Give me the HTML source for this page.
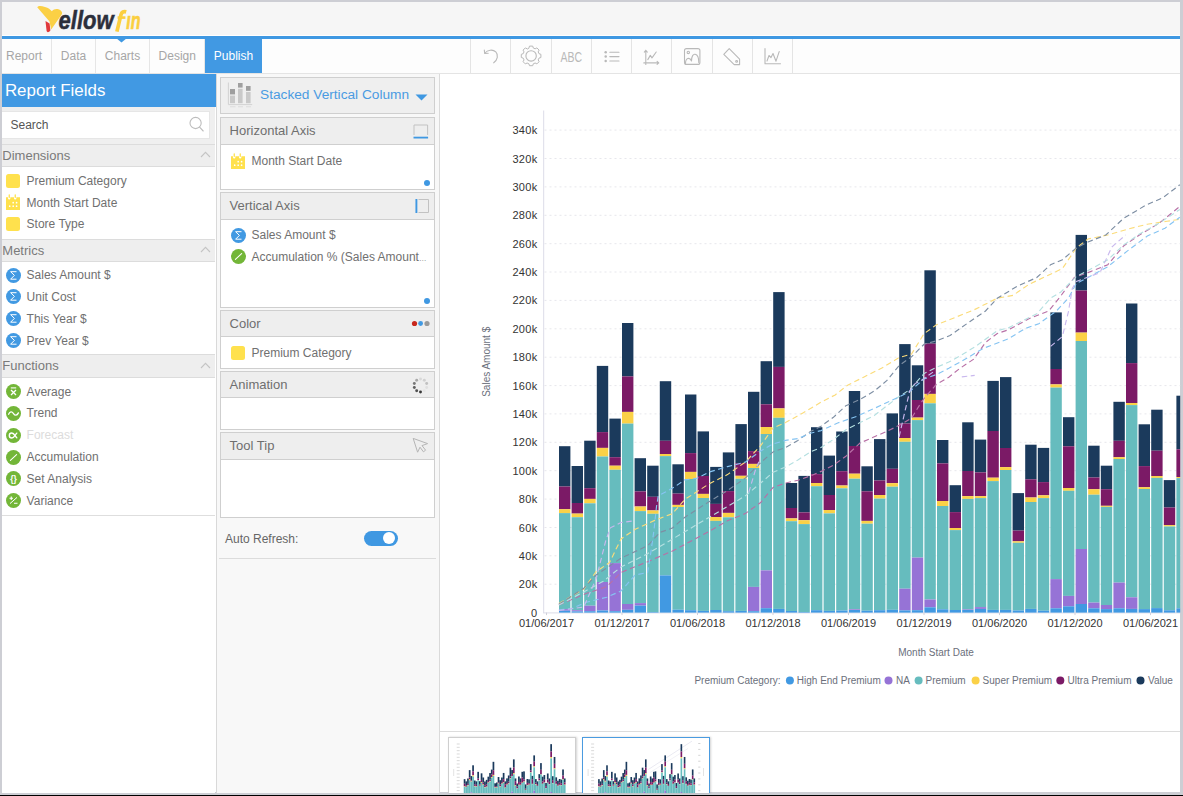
<!DOCTYPE html>
<html><head><meta charset="utf-8"><title>Yellowfin</title>
<style>
html,body{margin:0;padding:0}
body{width:1183px;height:796px;overflow:hidden;background:#cdced4;position:relative;font-family:"Liberation Sans",sans-serif}
.abs{position:absolute;white-space:nowrap}
.it{font-size:12px;color:#707070}
.dis{color:#dcdcdc}
.sh{background:#eeeeee;border-top:1px solid #dcdcdc;border-bottom:1px solid #dcdcdc;box-sizing:border-box;font-size:13px;color:#7a7a7a;padding-left:0px}
.tab{font-size:12px;color:#a6a6a6;text-align:center;height:34.5px;line-height:35px;top:38.5px}
.ph{background:#eeeeee;border:1px solid #cfcfcf;box-sizing:border-box;font-size:13px;color:#6f6f6f;padding-left:8.6px;left:220px;width:214.5px}
.pb{background:#fff;border:1px solid #cfcfcf;border-top:none;box-sizing:border-box;left:220px;width:214.5px}
#bars rect{width:var(--bw,11.4px)}
.yl{font-size:11px;fill:#333;letter-spacing:.3px;font-family:"Liberation Sans",sans-serif}
.xl{letter-spacing:0}
.lg{font-size:10px;fill:#6b6f7b;font-family:"Liberation Sans",sans-serif}
</style></head><body>
<div class="abs" style="left:2.3px;top:2.3px;width:1177.9px;height:790.2px;background:#fff"></div>
<div class="abs" style="left:0;top:794.8px;width:1183px;height:1.2px;background:#000"></div>
<!-- header -->
<div class="abs" style="left:2.3px;top:2.3px;width:1177.9px;height:32.9px;background:#f6f6f6"></div>
<div class="abs" style="left:2.3px;top:35.9px;width:1177.9px;height:2.7px;background:#3f98e2"></div>
<!-- logo -->
<svg class="abs" style="left:30px;top:2px" width="120" height="34" viewBox="30 2 120 34">
<path d="M37.2,7.2 C38.5,5.6 41,5.8 45,6.9 C48.5,7.8 50.3,9.2 51.8,11.3 C53.5,9.2 56,8.4 58.5,9.2 C61,10 62.6,12 62,14 L51.2,29.6 L49.5,21.5 Z" fill="#fbd045"/>
<path d="M45.5,21 L49.6,23.5 L50.4,30.5 C48.8,32.6 47,32.6 46.6,31 Z" fill="#e0393b"/>
<text x="58.6" y="28.8" font-family="Liberation Sans" font-weight="bold" font-style="italic" font-size="25.5" fill="#2c2f3b" stroke="#2c2f3b" stroke-width="0.5" textLength="55" lengthAdjust="spacingAndGlyphs">ellow</text>
<path d="M116.9,31.6 L121,14.6 C121.7,11.9 123.6,11.2 126.2,11.9" fill="none" stroke="#fbcf3f" stroke-width="3.7" stroke-linecap="butt"/><path d="M117.6,17.6 H125.4" stroke="#fbcf3f" stroke-width="2.6"/>
<text x="126.3" y="28.8" font-family="Liberation Sans" font-weight="bold" font-style="italic" font-size="24.5" fill="#fbcf3f" stroke="#fbcf3f" stroke-width="0.7" textLength="14.2" lengthAdjust="spacingAndGlyphs">ın</text>
</svg>
<!-- tabs row -->
<div class="abs" style="left:2.3px;top:38.6px;width:1177.9px;height:34.4px;background:#fdfdfd"></div>
<div class="abs" style="left:2.3px;top:72.8px;width:1177.9px;height:1.2px;background:#e4e4e4"></div>
<div class="abs tab" style="left:2.3px;width:43.4px">Report</div>
<div class="abs tab" style="left:52px;width:43px">Data</div>
<div class="abs tab" style="left:95.5px;width:54px">Charts</div>
<div class="abs tab" style="left:150px;width:54.5px">Design</div>
<div class="abs tab" style="left:205px;width:57px;background:#4199e3;color:#fff;height:34.3px">Publish</div>
<div class="abs" style="left:51.3px;top:38.6px;width:1px;height:34.2px;background:#e6e6e6"></div>
<div class="abs" style="left:94.8px;top:38.6px;width:1px;height:34.2px;background:#e6e6e6"></div>
<div class="abs" style="left:149.2px;top:38.6px;width:1px;height:34.2px;background:#e6e6e6"></div>
<div class="abs" style="left:204.2px;top:38.6px;width:1px;height:34.2px;background:#e6e6e6"></div>
<svg class="abs" style="left:116px;top:38.4px" width="11" height="5" viewBox="0 0 11 5"><path d="M0,0 H11 L5.5,4.6 Z" fill="#3f98e2"/></svg>
<!-- toolbar -->
<div class="abs" style="left:470.0px;top:38.6px;width:1px;height:34.2px;background:#e4e4e4"></div><div class="abs" style="left:510.2px;top:38.6px;width:1px;height:34.2px;background:#e4e4e4"></div><div class="abs" style="left:550.5px;top:38.6px;width:1px;height:34.2px;background:#e4e4e4"></div><div class="abs" style="left:590.7px;top:38.6px;width:1px;height:34.2px;background:#e4e4e4"></div><div class="abs" style="left:631.0px;top:38.6px;width:1px;height:34.2px;background:#e4e4e4"></div><div class="abs" style="left:671.1px;top:38.6px;width:1px;height:34.2px;background:#e4e4e4"></div><div class="abs" style="left:711.5px;top:38.6px;width:1px;height:34.2px;background:#e4e4e4"></div><div class="abs" style="left:751.8px;top:38.6px;width:1px;height:34.2px;background:#e4e4e4"></div><div class="abs" style="left:791.9px;top:38.6px;width:1px;height:34.2px;background:#e4e4e4"></div><svg class="abs" style="left:470px;top:38px" width="324" height="36" viewBox="470 38 324 36" fill="none" stroke="#b9b9b9" stroke-width="1.1" stroke-linecap="round" stroke-linejoin="round">
<!-- undo -->
<path d="M485,53 C487.4,50 492.6,48.9 495.8,51.9 C498.7,54.8 497.6,60 493.7,62.8"/><path d="M484.3,50 L484.7,53.5 L488.2,53.3"/>
<!-- gear -->
<circle cx="531.1" cy="55.9" r="5.2"/>
<path d="M528.9,48.0 L529.5,46.1 L532.7,46.1 L533.3,48.0 L535.1,48.8 L536.9,47.9 L539.1,50.1 L538.2,51.9 L539.0,53.7 L540.9,54.3 L540.9,57.5 L539.0,58.1 L538.2,59.9 L539.1,61.7 L536.9,63.9 L535.1,63.0 L533.3,63.8 L532.7,65.7 L529.5,65.7 L528.9,63.8 L527.1,63.0 L525.3,63.9 L523.1,61.7 L524.0,59.9 L523.2,58.1 L521.3,57.5 L521.3,54.3 L523.2,53.7 L524.0,51.9 L523.1,50.1 L525.3,47.9 L527.1,48.8 Z" stroke-width="1" stroke-linejoin="round"/>
<!-- ABC -->
<text x="571.2" y="62" text-anchor="middle" font-family="Liberation Sans" font-size="14.5" fill="#b9b9b9" stroke="none" textLength="21.5" lengthAdjust="spacingAndGlyphs">ABC</text>
<!-- list -->
<g fill="#b9b9b9" stroke="none"><circle cx="605.7" cy="52.2" r="1.25"/><circle cx="605.7" cy="56.6" r="1.25"/><circle cx="605.7" cy="61" r="1.25"/></g>
<path d="M609.8,52.2 H619 M609.8,56.6 H619 M609.8,61 H619"/>
<!-- axis chart -->
<path d="M645.8,50.4 V64.4 M643.8,62.9 H658.7 M644.3,52.1 L645.8,50.3 L647.3,52.1 M657.1,61.4 L658.8,62.9 L657.1,64.4"/>
<path d="M647.8,59.6 L650.3,55.4 L652,57.9 L656.2,52"/>
<!-- image -->
<rect x="684.5" y="48.6" width="15.4" height="15.8" rx="2"/>
<circle cx="688.3" cy="52.4" r="1.2"/>
<path d="M685.5,63.5 C685.5,58 689.5,56.5 691.5,61 C691.5,51 698.8,52.5 698.8,62.5"/>
<!-- tag -->
<path d="M723.8,54.3 L729.2,48.7 L739.6,59.2 V64.6 H734.2 Z"/><circle cx="736.6" cy="61.4" r="0.9"/>
<!-- line chart -->
<path d="M765,48.6 V63.7 H780.5"/><path d="M767,61 L769,55.5 L771,57.6 L773,53.5 L776,61.2 L779.2,51.6"/>
</svg>
<!-- left panel -->
<div class="abs" style="left:2.3px;top:74px;width:213.2px;height:718.5px;background:#fff"></div>
<div class="abs" style="left:2.3px;top:106.8px;width:213.2px;height:38px;background:#efefef"></div>
<div class="abs" style="left:2.3px;top:74.1px;width:213.7px;height:32.7px;background:#4199e3;color:#fff;font-size:16.9px;line-height:34.5px;padding-left:2.6px;box-sizing:border-box">Report Fields</div>
<div class="abs" style="left:2.3px;top:111.4px;width:208px;height:27.2px;background:#fff;border:1px solid #e6e6e6;border-left:none;box-sizing:border-box;font-size:12px;color:#555;line-height:27px;padding-left:8.2px">Search</div>
<svg class="abs" style="left:188px;top:115px" width="18" height="18" viewBox="0 0 18 18"><circle cx="7.6" cy="8" r="5.6" fill="none" stroke="#bdbdbd" stroke-width="1.1"/><path d="M11.6,12.2 L15.2,16" stroke="#bdbdbd" stroke-width="1.1" stroke-linecap="round"/></svg>
<div class="abs sh" style="left:2.3px;top:144px;width:213.2px;height:22.6px;line-height:21.6px">Dimensions</div><svg class="abs" style="left:199.5px;top:151.3px" width="11" height="7" viewBox="0 0 11 7"><path d="M1,6 L5.5,1.4 L10,6" fill="none" stroke="#c4c4c4" stroke-width="1.1"/></svg>
<div class="abs sh" style="left:2.3px;top:238.6px;width:213.2px;height:23px;line-height:22px">Metrics</div><svg class="abs" style="left:199.5px;top:246.1px" width="11" height="7" viewBox="0 0 11 7"><path d="M1,6 L5.5,1.4 L10,6" fill="none" stroke="#c4c4c4" stroke-width="1.1"/></svg>
<div class="abs sh" style="left:2.3px;top:354px;width:213.2px;height:23.6px;line-height:22.6px">Functions</div><svg class="abs" style="left:199.5px;top:361.8px" width="11" height="7" viewBox="0 0 11 7"><path d="M1,6 L5.5,1.4 L10,6" fill="none" stroke="#c4c4c4" stroke-width="1.1"/></svg>
<div class="abs" style="left:6.1px;top:173.8px;width:14.2px;height:14.2px;border-radius:2.5px;background:#ffe14d"></div><div class="abs it" style="left:26.6px;top:170.9px;height:20px;line-height:20px">Premium Category</div><svg class="abs" style="left:6.1px;top:194.29999999999998px" width="14.2" height="16.2" viewBox="0 0 14.2 16.2">
<path d="M0,3.2 H2 V4.2 a1.2,1.2 0 0 0 2.4,0 V3.2 H8 V4.2 a1.2,1.2 0 0 0 2.4,0 V3.2 H14.2 V16.2 H0 Z" fill="#ffe14d"/>
<rect x="2.6" y="0.3" width="1.3" height="3.6" rx=".6" fill="#ffe14d"/><rect x="8.6" y="0.3" width="1.3" height="3.6" rx=".6" fill="#ffe14d"/>
<g fill="#fff"><circle cx="7.2" cy="8.7" r=".85"/><circle cx="10.6" cy="8.7" r=".85"/><circle cx="3.7" cy="12.2" r=".85"/><circle cx="7.2" cy="12.2" r=".85"/><circle cx="10.6" cy="12.2" r=".85"/></g></svg><div class="abs it" style="left:26.6px;top:192.6px;height:20px;line-height:20px">Month Start Date</div><div class="abs" style="left:6.1px;top:217.3px;width:14.2px;height:14.2px;border-radius:2.5px;background:#ffe14d"></div><div class="abs it" style="left:26.6px;top:214.4px;height:20px;line-height:20px">Store Type</div><svg class="abs" style="left:5.8999999999999995px;top:267.5px" width="15" height="15" viewBox="0 0 15 15"><circle cx="7.5" cy="7.5" r="7.5" fill="#4199e2"/><path d="M10.5,3.7 H4.6 L8.4,7.4 L4.6,11.2 H10.5" fill="none" stroke="#fff" stroke-width="1" stroke-linejoin="miter"/></svg><div class="abs it" style="left:26.6px;top:265px;height:20px;line-height:20px">Sales Amount $</div><svg class="abs" style="left:5.8999999999999995px;top:289.3px" width="15" height="15" viewBox="0 0 15 15"><circle cx="7.5" cy="7.5" r="7.5" fill="#4199e2"/><path d="M10.5,3.7 H4.6 L8.4,7.4 L4.6,11.2 H10.5" fill="none" stroke="#fff" stroke-width="1" stroke-linejoin="miter"/></svg><div class="abs it" style="left:26.6px;top:286.8px;height:20px;line-height:20px">Unit Cost</div><svg class="abs" style="left:5.8999999999999995px;top:311.0px" width="15" height="15" viewBox="0 0 15 15"><circle cx="7.5" cy="7.5" r="7.5" fill="#4199e2"/><path d="M10.5,3.7 H4.6 L8.4,7.4 L4.6,11.2 H10.5" fill="none" stroke="#fff" stroke-width="1" stroke-linejoin="miter"/></svg><div class="abs it" style="left:26.6px;top:308.5px;height:20px;line-height:20px">This Year $</div><svg class="abs" style="left:5.8999999999999995px;top:333.4px" width="15" height="15" viewBox="0 0 15 15"><circle cx="7.5" cy="7.5" r="7.5" fill="#4199e2"/><path d="M10.5,3.7 H4.6 L8.4,7.4 L4.6,11.2 H10.5" fill="none" stroke="#fff" stroke-width="1" stroke-linejoin="miter"/></svg><div class="abs it" style="left:26.6px;top:330.9px;height:20px;line-height:20px">Prev Year $</div><svg class="abs" style="left:5.8999999999999995px;top:384.2px" width="15" height="15" viewBox="0 0 15 15"><circle cx="7.5" cy="7.5" r="7.5" fill="#73b638"/><path d="M4.8,3.9 H10.2" stroke="#fff" stroke-width="1.1"/><path d="M5,6 L10,11 M10,6 L5,11" stroke="#fff" stroke-width="1.3"/></svg><div class="abs it" style="left:26.6px;top:381.7px;height:20px;line-height:20px">Average</div><svg class="abs" style="left:5.8999999999999995px;top:405.8px" width="15" height="15" viewBox="0 0 15 15"><circle cx="7.5" cy="7.5" r="7.5" fill="#73b638"/><path d="M2.6,8.2 C4,5.2 6,5.4 7.5,7.6 C9,9.8 11,9.8 12.4,6.9" fill="none" stroke="#fff" stroke-width="1.3" stroke-linecap="round"/></svg><div class="abs it" style="left:26.6px;top:403.3px;height:20px;line-height:20px">Trend</div><svg class="abs" style="left:5.8999999999999995px;top:427.5px" width="15" height="15" viewBox="0 0 15 15"><circle cx="7.5" cy="7.5" r="7.5" fill="#73b638"/><path d="M11.3,4.9 C9.5,5.3 8.6,10 5.8,10 A2.5,2.5 0 1 1 5.8,5 C8.6,5 9.5,9.7 11.3,10.1" fill="none" stroke="#fff" stroke-width="1.4"/></svg><div class="abs it dis" style="left:26.6px;top:425px;height:20px;line-height:20px">Forecast</div><svg class="abs" style="left:5.8999999999999995px;top:449.5px" width="15" height="15" viewBox="0 0 15 15"><circle cx="7.5" cy="7.5" r="7.5" fill="#73b638"/><path d="M4.4,10.3 L10.6,4.7" stroke="#fff" stroke-width="1.1" stroke-linecap="round"/></svg><div class="abs it" style="left:26.6px;top:447px;height:20px;line-height:20px">Accumulation</div><svg class="abs" style="left:5.8999999999999995px;top:471.3px" width="15" height="15" viewBox="0 0 15 15"><circle cx="7.5" cy="7.5" r="7.5" fill="#73b638"/><text x="7.5" y="10.6" text-anchor="middle" font-size="8.5" font-weight="bold" fill="#fff" font-family="Liberation Sans">{}</text></svg><div class="abs it" style="left:26.6px;top:468.8px;height:20px;line-height:20px">Set Analysis</div><svg class="abs" style="left:5.8999999999999995px;top:493.0px" width="15" height="15" viewBox="0 0 15 15"><circle cx="7.5" cy="7.5" r="7.5" fill="#73b638"/><path d="M4,10.6 L11,4.4" stroke="#fff" stroke-width="1"/><path d="M3.5,5.3 H7 M5.25,3.6 V7 M8,10.3 H11.5" stroke="#fff" stroke-width="1.1"/></svg><div class="abs it" style="left:26.6px;top:490.5px;height:20px;line-height:20px">Variance</div>
<div class="abs" style="left:2.3px;top:514.6px;width:213.2px;height:1px;background:#dedede"></div>
<div class="abs" style="left:215.5px;top:74px;width:1px;height:718.5px;background:#d9d9d9"></div>
<!-- middle panel -->
<div class="abs" style="left:216.5px;top:74px;width:222px;height:718.5px;background:#f8f8f8"></div>
<div class="abs" style="left:438.5px;top:74px;width:1px;height:718.5px;background:#dadada"></div>
<div class="abs" style="left:220px;top:77px;width:214.5px;height:37px;background:#efefef;border:1px solid #cfcfcf;box-sizing:border-box"></div>
<svg class="abs" style="left:226px;top:80px" width="28" height="30" viewBox="226 80 28 30">
<path d="M228.4,82.5 V104.6 H252.2" fill="none" stroke="#d2d2d2" stroke-width="1"/>
<path d="M230,106.8 H235.5 M238,106.8 H243 M246,106.8 H251" stroke="#dcdcdc" stroke-width="1"/>
<rect x="230" y="89" width="5" height="5.4" fill="#9f9f9f"/><rect x="230" y="95.6" width="5" height="7.6" fill="#c9c9c9"/>
<rect x="238" y="83" width="4.6" height="4.6" fill="#9f9f9f"/><rect x="238" y="88.8" width="4.6" height="14.4" fill="#c9c9c9"/>
<rect x="246" y="86" width="4.6" height="4.8" fill="#9f9f9f"/><rect x="246" y="92" width="4.6" height="11.2" fill="#c9c9c9"/>
</svg>
<div class="abs" style="left:260px;top:85px;height:20px;line-height:20px;font-size:13.7px;color:#4a9be2">Stacked Vertical Column</div>
<svg class="abs" style="left:414.5px;top:93.5px" width="13" height="7" viewBox="0 0 13 7"><path d="M0.5,0.5 H12.5 L6.5,6.5 Z" fill="#3f98e2"/></svg>
<div class="abs ph" style="top:117px;height:28px;line-height:26px">Horizontal Axis</div><div class="abs pb" style="top:145px;height:45px"></div><svg class="abs" style="left:413px;top:123.5px" width="16" height="16" viewBox="0 0 16 16"><path d="M1,11 V1 H14.6 V11" fill="none" stroke="#c2c2c2" stroke-width="1"/><path d="M.5,13.6 H15.1" stroke="#3f98e2" stroke-width="1.8"/></svg>
<div class="abs ph" style="top:192px;height:28px;line-height:26px">Vertical Axis</div><div class="abs pb" style="top:220px;height:87.5px"></div><svg class="abs" style="left:413.5px;top:197.5px" width="16" height="16" viewBox="0 0 16 16"><path d="M4.5,1.5 H14.5 V14.5 H4.5" fill="none" stroke="#c2c2c2" stroke-width="1"/><path d="M2.4,1 V15" stroke="#3f98e2" stroke-width="1.9"/></svg>
<div class="abs ph" style="top:310px;height:27px;line-height:25px">Color</div><div class="abs pb" style="top:337px;height:32px"></div><svg class="abs" style="left:411px;top:320px" width="20" height="7" viewBox="0 0 20 7"><circle cx="3.5" cy="3.5" r="2.6" fill="#c8281e"/><circle cx="9.6" cy="3.5" r="2.4" fill="#4199e2"/><circle cx="16" cy="3.5" r="2.6" fill="#9a9a9a"/></svg>
<div class="abs ph" style="top:371px;height:27px;line-height:25px">Animation</div><div class="abs pb" style="top:398px;height:32.39999999999998px"></div><svg class="abs" style="left:412.2px;top:376.8px" width="17" height="17" viewBox="0 0 17 17"><circle cx="8.50" cy="2.00" r="1.45" fill="#d8d8d8"/><circle cx="12.32" cy="3.24" r="1.45" fill="#d0d0d0"/><circle cx="14.68" cy="6.49" r="1.45" fill="#c0c0c0"/><circle cx="14.68" cy="10.51" r="1.45" fill="#e0e0e0"/><circle cx="12.32" cy="13.76" r="1.45" fill="#e6e6e6"/><circle cx="8.50" cy="15.00" r="1.45" fill="#383838"/><circle cx="4.68" cy="13.76" r="1.45" fill="#505050"/><circle cx="2.32" cy="10.51" r="1.45" fill="#606060"/><circle cx="2.32" cy="6.49" r="1.45" fill="#787878"/><circle cx="4.68" cy="3.24" r="1.45" fill="#a8a8a8"/></svg>
<div class="abs ph" style="top:432px;height:28px;line-height:26px">Tool Tip</div><div class="abs pb" style="top:460px;height:58px"></div><svg class="abs" style="left:411px;top:436px" width="19" height="19" viewBox="0 0 19 19"><path d="M2.2,2.4 L16.6,7.6 L11,9.6 L14.6,14.2 L12.4,15.8 L9,11.2 L6.6,16.2 Z" fill="none" stroke="#b5b5b5" stroke-width="1" stroke-linejoin="round"/></svg>
<svg class="abs" style="left:231px;top:152.7px" width="14.2" height="16.2" viewBox="0 0 14.2 16.2">
<path d="M0,3.2 H2 V4.2 a1.2,1.2 0 0 0 2.4,0 V3.2 H8 V4.2 a1.2,1.2 0 0 0 2.4,0 V3.2 H14.2 V16.2 H0 Z" fill="#ffe14d"/>
<rect x="2.6" y="0.3" width="1.3" height="3.6" rx=".6" fill="#ffe14d"/><rect x="8.6" y="0.3" width="1.3" height="3.6" rx=".6" fill="#ffe14d"/>
<g fill="#fff"><circle cx="7.2" cy="8.7" r=".85"/><circle cx="10.6" cy="8.7" r=".85"/><circle cx="3.7" cy="12.2" r=".85"/><circle cx="7.2" cy="12.2" r=".85"/><circle cx="10.6" cy="12.2" r=".85"/></g></svg><div class="abs it" style="left:251.5px;top:151px;height:20px;line-height:20px">Month Start Date</div>
<svg class="abs" style="left:230.8px;top:227.7px" width="15" height="15" viewBox="0 0 15 15"><circle cx="7.5" cy="7.5" r="7.5" fill="#4199e2"/><path d="M10.5,3.7 H4.6 L8.4,7.4 L4.6,11.2 H10.5" fill="none" stroke="#fff" stroke-width="1" stroke-linejoin="miter"/></svg><div class="abs it" style="left:251.5px;top:225.2px;height:20px;line-height:20px">Sales Amount $</div>
<svg class="abs" style="left:230.8px;top:249.3px" width="15" height="15" viewBox="0 0 15 15"><circle cx="7.5" cy="7.5" r="7.5" fill="#73b638"/><path d="M4.4,10.3 L10.6,4.7" stroke="#fff" stroke-width="1.1" stroke-linecap="round"/></svg><div class="abs it" style="left:251.5px;top:246.8px;height:20px;line-height:20px">Accumulation % (Sales Amount<span style="font-size:7.5px">…</span></div>
<div class="abs" style="left:231px;top:345.9px;width:14.2px;height:14.2px;border-radius:2.5px;background:#ffe14d"></div><div class="abs it" style="left:251.5px;top:343px;height:20px;line-height:20px">Premium Category</div>
<div class="abs" style="left:424px;top:179.5px;width:6px;height:6px;border-radius:3px;background:#3f98e2"></div>
<div class="abs" style="left:424px;top:297.5px;width:6px;height:6px;border-radius:3px;background:#3f98e2"></div>
<div class="abs it" style="left:225px;top:528.5px;height:20px;line-height:20px;color:#666">Auto Refresh:</div>
<div class="abs" style="left:364px;top:530.5px;width:34px;height:15.6px;border-radius:8px;background:#3f98e2"></div>
<div class="abs" style="left:383px;top:532.3px;width:12px;height:12px;border-radius:6px;background:#fff"></div>
<div class="abs" style="left:218.5px;top:557.5px;width:217.5px;height:1px;background:#dcdcdc"></div>
<!-- chart -->
<svg class="abs" style="left:0;top:0" width="1183" height="796" viewBox="0 0 1183 796">
<defs><clipPath id="cc"><rect x="439" y="74" width="741.2" height="657"/></clipPath>
<g id="bars"><rect x="559.0" y="446.2" width="11.4" height="40.3" fill="#1b3a5c"/>
<rect x="559.0" y="486.5" width="11.4" height="22.7" fill="#7b1a66"/>
<rect x="559.0" y="509.2" width="11.4" height="3.9" fill="#fbd147"/>
<rect x="559.0" y="513.1" width="11.4" height="96.0" fill="#66bcbe"/>
<rect x="559.0" y="609.1" width="11.4" height="1.6" fill="#9673d6"/>
<rect x="559.0" y="610.7" width="11.4" height="1.9" fill="#4199e2"/>
<rect x="571.6" y="466.0" width="11.4" height="37.0" fill="#1b3a5c"/>
<rect x="571.6" y="503.0" width="11.4" height="10.6" fill="#7b1a66"/>
<rect x="571.6" y="513.6" width="11.4" height="3.6" fill="#fbd147"/>
<rect x="571.6" y="517.2" width="11.4" height="93.0" fill="#66bcbe"/>
<rect x="571.6" y="610.2" width="11.4" height="1.2" fill="#9673d6"/>
<rect x="571.6" y="611.4" width="11.4" height="1.2" fill="#4199e2"/>
<rect x="584.2" y="440.7" width="11.4" height="47.5" fill="#1b3a5c"/>
<rect x="584.2" y="488.2" width="11.4" height="10.7" fill="#7b1a66"/>
<rect x="584.2" y="498.9" width="11.4" height="4.4" fill="#fbd147"/>
<rect x="584.2" y="503.3" width="11.4" height="102.4" fill="#66bcbe"/>
<rect x="584.2" y="605.7" width="11.4" height="5.5" fill="#9673d6"/>
<rect x="584.2" y="611.2" width="11.4" height="1.4" fill="#4199e2"/>
<rect x="596.8" y="365.9" width="11.4" height="66.2" fill="#1b3a5c"/>
<rect x="596.8" y="432.1" width="11.4" height="15.8" fill="#7b1a66"/>
<rect x="596.8" y="447.9" width="11.4" height="8.6" fill="#fbd147"/>
<rect x="596.8" y="456.5" width="11.4" height="125.5" fill="#66bcbe"/>
<rect x="596.8" y="582.0" width="11.4" height="28.5" fill="#9673d6"/>
<rect x="596.8" y="610.5" width="11.4" height="2.1" fill="#4199e2"/>
<rect x="609.4" y="418.6" width="11.4" height="38.6" fill="#1b3a5c"/>
<rect x="609.4" y="457.2" width="11.4" height="8.5" fill="#7b1a66"/>
<rect x="609.4" y="465.7" width="11.4" height="4.1" fill="#fbd147"/>
<rect x="609.4" y="469.8" width="11.4" height="93.3" fill="#66bcbe"/>
<rect x="609.4" y="563.1" width="11.4" height="48.1" fill="#9673d6"/>
<rect x="609.4" y="611.2" width="11.4" height="1.4" fill="#4199e2"/>
<rect x="622.0" y="323.0" width="11.4" height="53.4" fill="#1b3a5c"/>
<rect x="622.0" y="376.4" width="11.4" height="35.5" fill="#7b1a66"/>
<rect x="622.0" y="411.9" width="11.4" height="11.7" fill="#fbd147"/>
<rect x="622.0" y="423.6" width="11.4" height="180.4" fill="#66bcbe"/>
<rect x="622.0" y="604.0" width="11.4" height="5.8" fill="#9673d6"/>
<rect x="622.0" y="609.8" width="11.4" height="2.8" fill="#4199e2"/>
<rect x="634.6" y="458.2" width="11.4" height="33.2" fill="#1b3a5c"/>
<rect x="634.6" y="491.4" width="11.4" height="15.1" fill="#7b1a66"/>
<rect x="634.6" y="506.5" width="11.4" height="4.6" fill="#fbd147"/>
<rect x="634.6" y="511.1" width="11.4" height="92.0" fill="#66bcbe"/>
<rect x="634.6" y="603.1" width="11.4" height="2.5" fill="#9673d6"/>
<rect x="634.6" y="605.6" width="11.4" height="7.0" fill="#4199e2"/>
<rect x="647.2" y="465.7" width="11.4" height="31.1" fill="#1b3a5c"/>
<rect x="647.2" y="496.8" width="11.4" height="13.6" fill="#7b1a66"/>
<rect x="647.2" y="510.4" width="11.4" height="3.4" fill="#fbd147"/>
<rect x="647.2" y="513.8" width="11.4" height="98.2" fill="#66bcbe"/>
<rect x="647.2" y="612.0" width="11.4" height="0.6" fill="#4199e2"/>
<rect x="659.8" y="381.2" width="11.4" height="59.6" fill="#1b3a5c"/>
<rect x="659.8" y="440.8" width="11.4" height="13.2" fill="#7b1a66"/>
<rect x="659.8" y="454.0" width="11.4" height="2.1" fill="#fbd147"/>
<rect x="659.8" y="456.1" width="11.4" height="119.3" fill="#66bcbe"/>
<rect x="659.8" y="575.4" width="11.4" height="37.2" fill="#4199e2"/>
<rect x="672.4" y="464.3" width="11.4" height="29.3" fill="#1b3a5c"/>
<rect x="672.4" y="493.6" width="11.4" height="11.3" fill="#7b1a66"/>
<rect x="672.4" y="504.9" width="11.4" height="2.1" fill="#fbd147"/>
<rect x="672.4" y="507.0" width="11.4" height="102.7" fill="#66bcbe"/>
<rect x="672.4" y="609.7" width="11.4" height="2.9" fill="#4199e2"/>
<rect x="685.0" y="394.5" width="11.4" height="58.6" fill="#1b3a5c"/>
<rect x="685.0" y="453.1" width="11.4" height="18.8" fill="#7b1a66"/>
<rect x="685.0" y="471.9" width="11.4" height="7.1" fill="#fbd147"/>
<rect x="685.0" y="479.0" width="11.4" height="131.2" fill="#66bcbe"/>
<rect x="685.0" y="610.2" width="11.4" height="2.4" fill="#4199e2"/>
<rect x="697.6" y="431.4" width="11.4" height="44.6" fill="#1b3a5c"/>
<rect x="697.6" y="476.0" width="11.4" height="17.9" fill="#7b1a66"/>
<rect x="697.6" y="493.9" width="11.4" height="4.1" fill="#fbd147"/>
<rect x="697.6" y="498.0" width="11.4" height="112.9" fill="#66bcbe"/>
<rect x="697.6" y="610.9" width="11.4" height="1.7" fill="#4199e2"/>
<rect x="710.2" y="466.9" width="11.4" height="37.0" fill="#1b3a5c"/>
<rect x="710.2" y="503.9" width="11.4" height="13.1" fill="#7b1a66"/>
<rect x="710.2" y="517.0" width="11.4" height="3.9" fill="#fbd147"/>
<rect x="710.2" y="520.9" width="11.4" height="89.1" fill="#66bcbe"/>
<rect x="710.2" y="610.0" width="11.4" height="2.6" fill="#4199e2"/>
<rect x="722.8" y="452.4" width="11.4" height="38.7" fill="#1b3a5c"/>
<rect x="722.8" y="491.1" width="11.4" height="21.8" fill="#7b1a66"/>
<rect x="722.8" y="512.9" width="11.4" height="4.4" fill="#fbd147"/>
<rect x="722.8" y="517.3" width="11.4" height="93.9" fill="#66bcbe"/>
<rect x="722.8" y="611.2" width="11.4" height="1.4" fill="#4199e2"/>
<rect x="735.4" y="424.1" width="11.4" height="38.9" fill="#1b3a5c"/>
<rect x="735.4" y="463.0" width="11.4" height="12.8" fill="#7b1a66"/>
<rect x="735.4" y="475.8" width="11.4" height="3.0" fill="#fbd147"/>
<rect x="735.4" y="478.8" width="11.4" height="132.1" fill="#66bcbe"/>
<rect x="735.4" y="610.9" width="11.4" height="1.7" fill="#4199e2"/>
<rect x="748.0" y="391.8" width="11.4" height="59.3" fill="#1b3a5c"/>
<rect x="748.0" y="451.1" width="11.4" height="12.8" fill="#7b1a66"/>
<rect x="748.0" y="463.9" width="11.4" height="4.1" fill="#fbd147"/>
<rect x="748.0" y="468.0" width="11.4" height="118.9" fill="#66bcbe"/>
<rect x="748.0" y="586.9" width="11.4" height="24.3" fill="#9673d6"/>
<rect x="748.0" y="611.2" width="11.4" height="1.4" fill="#4199e2"/>
<rect x="760.6" y="361.2" width="11.4" height="43.1" fill="#1b3a5c"/>
<rect x="760.6" y="404.3" width="11.4" height="22.7" fill="#7b1a66"/>
<rect x="760.6" y="427.0" width="11.4" height="7.0" fill="#fbd147"/>
<rect x="760.6" y="434.0" width="11.4" height="136.4" fill="#66bcbe"/>
<rect x="760.6" y="570.4" width="11.4" height="37.8" fill="#9673d6"/>
<rect x="760.6" y="608.2" width="11.4" height="4.4" fill="#4199e2"/>
<rect x="773.2" y="292.1" width="11.4" height="74.8" fill="#1b3a5c"/>
<rect x="773.2" y="366.9" width="11.4" height="41.5" fill="#7b1a66"/>
<rect x="773.2" y="408.4" width="11.4" height="9.4" fill="#fbd147"/>
<rect x="773.2" y="417.8" width="11.4" height="191.1" fill="#66bcbe"/>
<rect x="773.2" y="608.9" width="11.4" height="3.7" fill="#4199e2"/>
<rect x="785.8" y="483.0" width="11.4" height="25.0" fill="#1b3a5c"/>
<rect x="785.8" y="508.0" width="11.4" height="10.4" fill="#7b1a66"/>
<rect x="785.8" y="518.4" width="11.4" height="2.8" fill="#fbd147"/>
<rect x="785.8" y="521.2" width="11.4" height="89.8" fill="#66bcbe"/>
<rect x="785.8" y="611.0" width="11.4" height="1.6" fill="#4199e2"/>
<rect x="798.4" y="475.9" width="11.4" height="36.5" fill="#1b3a5c"/>
<rect x="798.4" y="512.4" width="11.4" height="7.8" fill="#7b1a66"/>
<rect x="798.4" y="520.2" width="11.4" height="3.9" fill="#fbd147"/>
<rect x="798.4" y="524.1" width="11.4" height="87.9" fill="#66bcbe"/>
<rect x="798.4" y="612.0" width="11.4" height="0.6" fill="#4199e2"/>
<rect x="811.0" y="427.2" width="11.4" height="46.9" fill="#1b3a5c"/>
<rect x="811.0" y="474.1" width="11.4" height="8.9" fill="#7b1a66"/>
<rect x="811.0" y="483.0" width="11.4" height="3.2" fill="#fbd147"/>
<rect x="811.0" y="486.2" width="11.4" height="124.0" fill="#66bcbe"/>
<rect x="811.0" y="610.2" width="11.4" height="2.4" fill="#4199e2"/>
<rect x="823.6" y="455.6" width="11.4" height="39.4" fill="#1b3a5c"/>
<rect x="823.6" y="495.0" width="11.4" height="15.0" fill="#7b1a66"/>
<rect x="823.6" y="510.0" width="11.4" height="3.4" fill="#fbd147"/>
<rect x="823.6" y="513.4" width="11.4" height="97.5" fill="#66bcbe"/>
<rect x="823.6" y="610.9" width="11.4" height="1.7" fill="#4199e2"/>
<rect x="836.2" y="431.5" width="11.4" height="39.7" fill="#1b3a5c"/>
<rect x="836.2" y="471.2" width="11.4" height="14.3" fill="#7b1a66"/>
<rect x="836.2" y="485.5" width="11.4" height="2.8" fill="#fbd147"/>
<rect x="836.2" y="488.3" width="11.4" height="122.2" fill="#66bcbe"/>
<rect x="836.2" y="610.5" width="11.4" height="2.1" fill="#4199e2"/>
<rect x="848.8" y="391.0" width="11.4" height="55.0" fill="#1b3a5c"/>
<rect x="848.8" y="446.0" width="11.4" height="27.7" fill="#7b1a66"/>
<rect x="848.8" y="473.7" width="11.4" height="5.0" fill="#fbd147"/>
<rect x="848.8" y="478.7" width="11.4" height="130.6" fill="#66bcbe"/>
<rect x="848.8" y="609.3" width="11.4" height="0.7" fill="#9673d6"/>
<rect x="848.8" y="610.0" width="11.4" height="2.6" fill="#4199e2"/>
<rect x="861.4" y="466.3" width="11.4" height="25.0" fill="#1b3a5c"/>
<rect x="861.4" y="491.3" width="11.4" height="29.6" fill="#7b1a66"/>
<rect x="861.4" y="520.9" width="11.4" height="2.8" fill="#fbd147"/>
<rect x="861.4" y="523.7" width="11.4" height="87.0" fill="#66bcbe"/>
<rect x="861.4" y="610.7" width="11.4" height="1.9" fill="#4199e2"/>
<rect x="874.0" y="439.1" width="11.4" height="41.4" fill="#1b3a5c"/>
<rect x="874.0" y="480.5" width="11.4" height="14.5" fill="#7b1a66"/>
<rect x="874.0" y="495.0" width="11.4" height="3.6" fill="#fbd147"/>
<rect x="874.0" y="498.6" width="11.4" height="111.6" fill="#66bcbe"/>
<rect x="874.0" y="610.2" width="11.4" height="2.4" fill="#4199e2"/>
<rect x="886.6" y="413.4" width="11.4" height="55.4" fill="#1b3a5c"/>
<rect x="886.6" y="468.8" width="11.4" height="14.3" fill="#7b1a66"/>
<rect x="886.6" y="483.1" width="11.4" height="3.6" fill="#fbd147"/>
<rect x="886.6" y="486.7" width="11.4" height="123.1" fill="#66bcbe"/>
<rect x="886.6" y="609.8" width="11.4" height="2.8" fill="#4199e2"/>
<rect x="899.2" y="344.1" width="11.4" height="79.4" fill="#1b3a5c"/>
<rect x="899.2" y="423.5" width="11.4" height="14.5" fill="#7b1a66"/>
<rect x="899.2" y="438.0" width="11.4" height="3.8" fill="#fbd147"/>
<rect x="899.2" y="441.8" width="11.4" height="146.9" fill="#66bcbe"/>
<rect x="899.2" y="588.7" width="11.4" height="21.7" fill="#9673d6"/>
<rect x="899.2" y="610.4" width="11.4" height="2.2" fill="#4199e2"/>
<rect x="911.8" y="365.3" width="11.4" height="34.7" fill="#1b3a5c"/>
<rect x="911.8" y="400.0" width="11.4" height="17.6" fill="#7b1a66"/>
<rect x="911.8" y="417.6" width="11.4" height="2.5" fill="#fbd147"/>
<rect x="911.8" y="420.1" width="11.4" height="137.5" fill="#66bcbe"/>
<rect x="911.8" y="557.6" width="11.4" height="52.6" fill="#9673d6"/>
<rect x="911.8" y="610.2" width="11.4" height="2.4" fill="#4199e2"/>
<rect x="924.4" y="270.3" width="11.4" height="73.3" fill="#1b3a5c"/>
<rect x="924.4" y="343.6" width="11.4" height="50.3" fill="#7b1a66"/>
<rect x="924.4" y="393.9" width="11.4" height="9.4" fill="#fbd147"/>
<rect x="924.4" y="403.3" width="11.4" height="196.2" fill="#66bcbe"/>
<rect x="924.4" y="599.5" width="11.4" height="7.8" fill="#9673d6"/>
<rect x="924.4" y="607.3" width="11.4" height="5.3" fill="#4199e2"/>
<rect x="937.0" y="440.0" width="11.4" height="23.4" fill="#1b3a5c"/>
<rect x="937.0" y="463.4" width="11.4" height="37.6" fill="#7b1a66"/>
<rect x="937.0" y="501.0" width="11.4" height="5.0" fill="#fbd147"/>
<rect x="937.0" y="506.0" width="11.4" height="103.3" fill="#66bcbe"/>
<rect x="937.0" y="609.3" width="11.4" height="3.3" fill="#4199e2"/>
<rect x="949.6" y="485.2" width="11.4" height="26.9" fill="#1b3a5c"/>
<rect x="949.6" y="512.1" width="11.4" height="15.9" fill="#7b1a66"/>
<rect x="949.6" y="528.0" width="11.4" height="2.1" fill="#fbd147"/>
<rect x="949.6" y="530.1" width="11.4" height="79.9" fill="#66bcbe"/>
<rect x="949.6" y="610.0" width="11.4" height="2.6" fill="#4199e2"/>
<rect x="962.2" y="422.3" width="11.4" height="48.7" fill="#1b3a5c"/>
<rect x="962.2" y="471.0" width="11.4" height="25.1" fill="#7b1a66"/>
<rect x="962.2" y="496.1" width="11.4" height="2.8" fill="#fbd147"/>
<rect x="962.2" y="498.9" width="11.4" height="110.4" fill="#66bcbe"/>
<rect x="962.2" y="609.3" width="11.4" height="0.6" fill="#9673d6"/>
<rect x="962.2" y="609.9" width="11.4" height="2.7" fill="#4199e2"/>
<rect x="974.8" y="439.6" width="11.4" height="32.8" fill="#1b3a5c"/>
<rect x="974.8" y="472.4" width="11.4" height="23.7" fill="#7b1a66"/>
<rect x="974.8" y="496.1" width="11.4" height="2.0" fill="#fbd147"/>
<rect x="974.8" y="498.1" width="11.4" height="109.0" fill="#66bcbe"/>
<rect x="974.8" y="607.1" width="11.4" height="1.8" fill="#9673d6"/>
<rect x="974.8" y="608.9" width="11.4" height="3.7" fill="#4199e2"/>
<rect x="987.4" y="380.9" width="11.4" height="50.1" fill="#1b3a5c"/>
<rect x="987.4" y="431.0" width="11.4" height="46.7" fill="#7b1a66"/>
<rect x="987.4" y="477.7" width="11.4" height="3.4" fill="#fbd147"/>
<rect x="987.4" y="481.1" width="11.4" height="128.8" fill="#66bcbe"/>
<rect x="987.4" y="609.9" width="11.4" height="2.7" fill="#4199e2"/>
<rect x="1000.0" y="377.1" width="11.4" height="70.9" fill="#1b3a5c"/>
<rect x="1000.0" y="448.0" width="11.4" height="19.1" fill="#7b1a66"/>
<rect x="1000.0" y="467.1" width="11.4" height="2.9" fill="#fbd147"/>
<rect x="1000.0" y="470.0" width="11.4" height="139.9" fill="#66bcbe"/>
<rect x="1000.0" y="609.9" width="11.4" height="2.7" fill="#4199e2"/>
<rect x="1012.6" y="493.1" width="11.4" height="37.5" fill="#1b3a5c"/>
<rect x="1012.6" y="530.6" width="11.4" height="10.7" fill="#7b1a66"/>
<rect x="1012.6" y="541.3" width="11.4" height="1.5" fill="#fbd147"/>
<rect x="1012.6" y="542.8" width="11.4" height="67.7" fill="#66bcbe"/>
<rect x="1012.6" y="610.5" width="11.4" height="2.1" fill="#4199e2"/>
<rect x="1025.2" y="444.7" width="11.4" height="34.6" fill="#1b3a5c"/>
<rect x="1025.2" y="479.3" width="11.4" height="18.2" fill="#7b1a66"/>
<rect x="1025.2" y="497.5" width="11.4" height="4.5" fill="#fbd147"/>
<rect x="1025.2" y="502.0" width="11.4" height="106.9" fill="#66bcbe"/>
<rect x="1025.2" y="608.9" width="11.4" height="3.7" fill="#4199e2"/>
<rect x="1037.8" y="447.9" width="11.4" height="34.2" fill="#1b3a5c"/>
<rect x="1037.8" y="482.1" width="11.4" height="13.2" fill="#7b1a66"/>
<rect x="1037.8" y="495.3" width="11.4" height="2.8" fill="#fbd147"/>
<rect x="1037.8" y="498.1" width="11.4" height="112.6" fill="#66bcbe"/>
<rect x="1037.8" y="610.7" width="11.4" height="1.9" fill="#4199e2"/>
<rect x="1050.4" y="312.4" width="11.4" height="56.6" fill="#1b3a5c"/>
<rect x="1050.4" y="369.0" width="11.4" height="15.4" fill="#7b1a66"/>
<rect x="1050.4" y="384.4" width="11.4" height="3.2" fill="#fbd147"/>
<rect x="1050.4" y="387.6" width="11.4" height="191.5" fill="#66bcbe"/>
<rect x="1050.4" y="579.1" width="11.4" height="29.2" fill="#9673d6"/>
<rect x="1050.4" y="608.3" width="11.4" height="4.3" fill="#4199e2"/>
<rect x="1063.0" y="417.2" width="11.4" height="29.1" fill="#1b3a5c"/>
<rect x="1063.0" y="446.3" width="11.4" height="41.7" fill="#7b1a66"/>
<rect x="1063.0" y="488.0" width="11.4" height="2.8" fill="#fbd147"/>
<rect x="1063.0" y="490.8" width="11.4" height="105.1" fill="#66bcbe"/>
<rect x="1063.0" y="595.9" width="11.4" height="10.4" fill="#9673d6"/>
<rect x="1063.0" y="606.3" width="11.4" height="6.3" fill="#4199e2"/>
<rect x="1075.6" y="234.9" width="11.4" height="55.6" fill="#1b3a5c"/>
<rect x="1075.6" y="290.5" width="11.4" height="42.1" fill="#7b1a66"/>
<rect x="1075.6" y="332.6" width="11.4" height="8.4" fill="#fbd147"/>
<rect x="1075.6" y="341.0" width="11.4" height="208.0" fill="#66bcbe"/>
<rect x="1075.6" y="549.0" width="11.4" height="55.0" fill="#9673d6"/>
<rect x="1075.6" y="604.0" width="11.4" height="8.6" fill="#4199e2"/>
<rect x="1088.2" y="445.7" width="11.4" height="31.8" fill="#1b3a5c"/>
<rect x="1088.2" y="477.5" width="11.4" height="11.7" fill="#7b1a66"/>
<rect x="1088.2" y="489.2" width="11.4" height="5.5" fill="#fbd147"/>
<rect x="1088.2" y="494.7" width="11.4" height="107.9" fill="#66bcbe"/>
<rect x="1088.2" y="602.6" width="11.4" height="5.7" fill="#9673d6"/>
<rect x="1088.2" y="608.3" width="11.4" height="4.3" fill="#4199e2"/>
<rect x="1100.8" y="465.7" width="11.4" height="23.5" fill="#1b3a5c"/>
<rect x="1100.8" y="489.2" width="11.4" height="16.6" fill="#7b1a66"/>
<rect x="1100.8" y="505.8" width="11.4" height="1.1" fill="#fbd147"/>
<rect x="1100.8" y="506.9" width="11.4" height="98.1" fill="#66bcbe"/>
<rect x="1100.8" y="605.0" width="11.4" height="4.1" fill="#9673d6"/>
<rect x="1100.8" y="609.1" width="11.4" height="3.5" fill="#4199e2"/>
<rect x="1113.4" y="401.8" width="11.4" height="39.0" fill="#1b3a5c"/>
<rect x="1113.4" y="440.8" width="11.4" height="16.4" fill="#7b1a66"/>
<rect x="1113.4" y="457.2" width="11.4" height="1.8" fill="#fbd147"/>
<rect x="1113.4" y="459.0" width="11.4" height="123.6" fill="#66bcbe"/>
<rect x="1113.4" y="582.6" width="11.4" height="25.7" fill="#9673d6"/>
<rect x="1113.4" y="608.3" width="11.4" height="4.3" fill="#4199e2"/>
<rect x="1126.0" y="303.5" width="11.4" height="59.6" fill="#1b3a5c"/>
<rect x="1126.0" y="363.1" width="11.4" height="39.9" fill="#7b1a66"/>
<rect x="1126.0" y="403.0" width="11.4" height="2.1" fill="#fbd147"/>
<rect x="1126.0" y="405.1" width="11.4" height="192.2" fill="#66bcbe"/>
<rect x="1126.0" y="597.3" width="11.4" height="11.6" fill="#9673d6"/>
<rect x="1126.0" y="608.9" width="11.4" height="3.7" fill="#4199e2"/>
<rect x="1138.6" y="424.3" width="11.4" height="41.8" fill="#1b3a5c"/>
<rect x="1138.6" y="466.1" width="11.4" height="21.1" fill="#7b1a66"/>
<rect x="1138.6" y="487.2" width="11.4" height="1.8" fill="#fbd147"/>
<rect x="1138.6" y="489.0" width="11.4" height="120.1" fill="#66bcbe"/>
<rect x="1138.6" y="609.1" width="11.4" height="3.5" fill="#4199e2"/>
<rect x="1151.2" y="409.7" width="11.4" height="41.0" fill="#1b3a5c"/>
<rect x="1151.2" y="450.7" width="11.4" height="25.3" fill="#7b1a66"/>
<rect x="1151.2" y="476.0" width="11.4" height="1.9" fill="#fbd147"/>
<rect x="1151.2" y="477.9" width="11.4" height="130.2" fill="#66bcbe"/>
<rect x="1151.2" y="608.1" width="11.4" height="4.5" fill="#4199e2"/>
<rect x="1163.8" y="480.1" width="11.4" height="27.4" fill="#1b3a5c"/>
<rect x="1163.8" y="507.5" width="11.4" height="17.6" fill="#7b1a66"/>
<rect x="1163.8" y="525.1" width="11.4" height="1.4" fill="#fbd147"/>
<rect x="1163.8" y="526.5" width="11.4" height="83.8" fill="#66bcbe"/>
<rect x="1163.8" y="610.3" width="11.4" height="2.3" fill="#4199e2"/>
<rect x="1176.4" y="395.7" width="11.4" height="53.6" fill="#1b3a5c"/>
<rect x="1176.4" y="449.3" width="11.4" height="27.7" fill="#7b1a66"/>
<rect x="1176.4" y="477.0" width="11.4" height="1.1" fill="#fbd147"/>
<rect x="1176.4" y="478.1" width="11.4" height="130.2" fill="#66bcbe"/>
<rect x="1176.4" y="608.3" width="11.4" height="4.3" fill="#4199e2"/>
<rect x="1189.0" y="440.0" width="11.4" height="30.0" fill="#1b3a5c"/>
<rect x="1189.0" y="470.0" width="11.4" height="20.0" fill="#7b1a66"/>
<rect x="1189.0" y="490.0" width="11.4" height="3.0" fill="#fbd147"/>
<rect x="1189.0" y="493.0" width="11.4" height="116.0" fill="#66bcbe"/>
<rect x="1189.0" y="609.0" width="11.4" height="3.6" fill="#4199e2"/>
<rect x="1201.6" y="135.0" width="11.4" height="65.0" fill="#1b3a5c"/>
<rect x="1201.6" y="200.0" width="11.4" height="50.0" fill="#7b1a66"/>
<rect x="1201.6" y="250.0" width="11.4" height="12.0" fill="#fbd147"/>
<rect x="1201.6" y="262.0" width="11.4" height="298.0" fill="#66bcbe"/>
<rect x="1201.6" y="560.0" width="11.4" height="46.0" fill="#9673d6"/>
<rect x="1201.6" y="606.0" width="11.4" height="6.6" fill="#4199e2"/>
<rect x="1214.2" y="420.0" width="11.4" height="35.0" fill="#1b3a5c"/>
<rect x="1214.2" y="455.0" width="11.4" height="25.0" fill="#7b1a66"/>
<rect x="1214.2" y="480.0" width="11.4" height="4.0" fill="#fbd147"/>
<rect x="1214.2" y="484.0" width="11.4" height="125.0" fill="#66bcbe"/>
<rect x="1214.2" y="609.0" width="11.4" height="3.6" fill="#4199e2"/>
<rect x="1226.8" y="249.0" width="11.4" height="61.0" fill="#1b3a5c"/>
<rect x="1226.8" y="310.0" width="11.4" height="40.0" fill="#7b1a66"/>
<rect x="1226.8" y="350.0" width="11.4" height="8.0" fill="#fbd147"/>
<rect x="1226.8" y="358.0" width="11.4" height="250.0" fill="#66bcbe"/>
<rect x="1226.8" y="608.0" width="11.4" height="4.6" fill="#4199e2"/>
<rect x="1239.4" y="430.0" width="11.4" height="35.0" fill="#1b3a5c"/>
<rect x="1239.4" y="465.0" width="11.4" height="23.0" fill="#7b1a66"/>
<rect x="1239.4" y="488.0" width="11.4" height="3.0" fill="#fbd147"/>
<rect x="1239.4" y="491.0" width="11.4" height="118.0" fill="#66bcbe"/>
<rect x="1239.4" y="609.0" width="11.4" height="3.6" fill="#4199e2"/>
<rect x="1252.0" y="460.0" width="11.4" height="30.0" fill="#1b3a5c"/>
<rect x="1252.0" y="490.0" width="11.4" height="15.0" fill="#7b1a66"/>
<rect x="1252.0" y="505.0" width="11.4" height="3.0" fill="#fbd147"/>
<rect x="1252.0" y="508.0" width="11.4" height="101.0" fill="#66bcbe"/>
<rect x="1252.0" y="609.0" width="11.4" height="3.6" fill="#4199e2"/>
<rect x="1264.6" y="445.0" width="11.4" height="33.0" fill="#1b3a5c"/>
<rect x="1264.6" y="478.0" width="11.4" height="19.0" fill="#7b1a66"/>
<rect x="1264.6" y="497.0" width="11.4" height="3.0" fill="#fbd147"/>
<rect x="1264.6" y="500.0" width="11.4" height="109.0" fill="#66bcbe"/>
<rect x="1264.6" y="609.0" width="11.4" height="3.6" fill="#4199e2"/>
<rect x="1277.2" y="450.0" width="11.4" height="32.0" fill="#1b3a5c"/>
<rect x="1277.2" y="482.0" width="11.4" height="18.0" fill="#7b1a66"/>
<rect x="1277.2" y="500.0" width="11.4" height="3.0" fill="#fbd147"/>
<rect x="1277.2" y="503.0" width="11.4" height="106.0" fill="#66bcbe"/>
<rect x="1277.2" y="609.0" width="11.4" height="3.6" fill="#4199e2"/>
<rect x="1289.8" y="360.0" width="11.4" height="55.0" fill="#1b3a5c"/>
<rect x="1289.8" y="415.0" width="11.4" height="30.0" fill="#7b1a66"/>
<rect x="1289.8" y="445.0" width="11.4" height="5.0" fill="#fbd147"/>
<rect x="1289.8" y="450.0" width="11.4" height="158.0" fill="#66bcbe"/>
<rect x="1289.8" y="608.0" width="11.4" height="4.6" fill="#4199e2"/>
<rect x="1302.4" y="440.0" width="11.4" height="35.0" fill="#1b3a5c"/>
<rect x="1302.4" y="475.0" width="11.4" height="20.0" fill="#7b1a66"/>
<rect x="1302.4" y="495.0" width="11.4" height="3.0" fill="#fbd147"/>
<rect x="1302.4" y="498.0" width="11.4" height="111.0" fill="#66bcbe"/>
<rect x="1302.4" y="609.0" width="11.4" height="3.6" fill="#4199e2"/></g></defs>
<g clip-path="url(#cc)">
<line x1="543.7" x2="543.7" y1="110.5" y2="613.1" stroke="#dcdce8" stroke-width="1"/>
<line x1="543.2" x2="1181" y1="612.9" y2="612.9" stroke="#dcdce8" stroke-width="1"/>
<line x1="544.5" x2="1181" y1="584.2" y2="584.2" stroke="#e7e7ec" stroke-width="1" stroke-dasharray="2,3"/>
<text x="537.5" y="588.2" text-anchor="end" class="yl">20k</text>
<line x1="544.5" x2="1181" y1="555.8" y2="555.8" stroke="#e7e7ec" stroke-width="1" stroke-dasharray="2,3"/>
<text x="537.5" y="559.8" text-anchor="end" class="yl">40k</text>
<line x1="544.5" x2="1181" y1="527.5" y2="527.5" stroke="#e7e7ec" stroke-width="1" stroke-dasharray="2,3"/>
<text x="537.5" y="531.5" text-anchor="end" class="yl">60k</text>
<line x1="544.5" x2="1181" y1="499.1" y2="499.1" stroke="#e7e7ec" stroke-width="1" stroke-dasharray="2,3"/>
<text x="537.5" y="503.1" text-anchor="end" class="yl">80k</text>
<line x1="544.5" x2="1181" y1="470.7" y2="470.7" stroke="#e7e7ec" stroke-width="1" stroke-dasharray="2,3"/>
<text x="537.5" y="474.7" text-anchor="end" class="yl">100k</text>
<line x1="544.5" x2="1181" y1="442.3" y2="442.3" stroke="#e7e7ec" stroke-width="1" stroke-dasharray="2,3"/>
<text x="537.5" y="446.3" text-anchor="end" class="yl">120k</text>
<line x1="544.5" x2="1181" y1="413.9" y2="413.9" stroke="#e7e7ec" stroke-width="1" stroke-dasharray="2,3"/>
<text x="537.5" y="417.9" text-anchor="end" class="yl">140k</text>
<line x1="544.5" x2="1181" y1="385.6" y2="385.6" stroke="#e7e7ec" stroke-width="1" stroke-dasharray="2,3"/>
<text x="537.5" y="389.6" text-anchor="end" class="yl">160k</text>
<line x1="544.5" x2="1181" y1="357.2" y2="357.2" stroke="#e7e7ec" stroke-width="1" stroke-dasharray="2,3"/>
<text x="537.5" y="361.2" text-anchor="end" class="yl">180k</text>
<line x1="544.5" x2="1181" y1="328.8" y2="328.8" stroke="#e7e7ec" stroke-width="1" stroke-dasharray="2,3"/>
<text x="537.5" y="332.8" text-anchor="end" class="yl">200k</text>
<line x1="544.5" x2="1181" y1="300.4" y2="300.4" stroke="#e7e7ec" stroke-width="1" stroke-dasharray="2,3"/>
<text x="537.5" y="304.4" text-anchor="end" class="yl">220k</text>
<line x1="544.5" x2="1181" y1="272.0" y2="272.0" stroke="#e7e7ec" stroke-width="1" stroke-dasharray="2,3"/>
<text x="537.5" y="276.0" text-anchor="end" class="yl">240k</text>
<line x1="544.5" x2="1181" y1="243.7" y2="243.7" stroke="#e7e7ec" stroke-width="1" stroke-dasharray="2,3"/>
<text x="537.5" y="247.7" text-anchor="end" class="yl">260k</text>
<line x1="544.5" x2="1181" y1="215.3" y2="215.3" stroke="#e7e7ec" stroke-width="1" stroke-dasharray="2,3"/>
<text x="537.5" y="219.3" text-anchor="end" class="yl">280k</text>
<line x1="544.5" x2="1181" y1="186.9" y2="186.9" stroke="#e7e7ec" stroke-width="1" stroke-dasharray="2,3"/>
<text x="537.5" y="190.9" text-anchor="end" class="yl">300k</text>
<line x1="544.5" x2="1181" y1="158.5" y2="158.5" stroke="#e7e7ec" stroke-width="1" stroke-dasharray="2,3"/>
<text x="537.5" y="162.5" text-anchor="end" class="yl">320k</text>
<line x1="544.5" x2="1181" y1="130.1" y2="130.1" stroke="#e7e7ec" stroke-width="1" stroke-dasharray="2,3"/>
<text x="537.5" y="134.1" text-anchor="end" class="yl">340k</text>
<text x="537.5" y="616.6" text-anchor="end" class="yl">0</text>
<use href="#bars"/>
<path d="M558.9,603.4 L583.7,589.2 L596.2,571.5 L609.5,562.6 L621.0,539.0 L635.2,529.3 L654.7,520.4 L672.5,513.6 L684.9,499.4 L709.8,483.4 L727.5,474.6 L745.3,462.1 L760.7,445.7 L773.1,427.9 L785.5,422.6 L803.3,412.8 L821.0,402.2 L835.2,394.9 L847.6,385.2 L863.6,377.2 L881.4,368.3 L899.1,357.6 L911.5,354.1 L924.0,333.7 L936.4,324.8 L950.0,319.5 L973.7,310.0 L997.3,298.2 L1013.1,295.3 L1028.9,284.4 L1062.4,268.6 L1076.3,247.9 L1088.0,239.0 L1107.8,235.0 L1127.5,229.2 L1147.3,224.2 L1167.0,221.3 L1179.8,219.3" fill="none" stroke="#fbdc7a" stroke-width="1.15" stroke-dasharray="5.5,3.5"/>
<path d="M558.9,604.3 L583.7,588.3 L596.2,575.0 L621.0,558.2 L647.6,545.7 L660.0,532.4 L672.5,528.0 L684.9,517.2 L709.8,501.2 L727.5,490.5 L745.3,478.1 L760.7,462.6 L773.1,451.9 L785.5,447.5 L797.9,440.4 L810.4,431.5 L821.0,426.2 L833.4,417.3 L845.9,405.7 L860.0,399.5 L874.3,391.0 L886.7,380.7 L899.1,365.6 L911.5,356.8 L924.0,344.3 L936.4,340.8 L950.0,335.5 L969.7,321.7 L985.5,311.0 L997.3,298.2 L1017.0,286.4 L1036.8,277.5 L1050.6,264.7 L1062.4,259.8 L1076.3,247.9 L1088.0,242.0 L1105.8,235.0 L1123.6,218.3 L1145.3,205.5 L1163.0,197.6 L1179.8,184.8" fill="none" stroke="#7d8ea3" stroke-width="1.15" stroke-dasharray="5.5,3.5"/>
<path d="M558.9,604.9 L585.5,593.7 L606.8,586.6 L621.0,572.4 L647.6,561.7 L672.5,551.0 L697.3,537.8 L709.8,531.0 L727.5,520.7 L745.3,513.6 L760.7,502.5 L773.1,487.4 L785.5,483.0 L797.9,480.3 L810.4,475.9 L821.0,471.4 L833.4,465.2 L845.9,456.3 L860.0,443.0 L874.3,436.8 L888.5,430.6 L900.9,424.4 L911.5,418.2 L918.6,406.6 L924.0,398.5 L936.4,384.3 L948.8,377.2 L960.0,368.3 L973.7,359.2 L985.5,342.4 L997.3,333.5 L1009.0,329.6 L1028.9,318.7 L1048.6,311.0 L1060.5,296.3 L1074.3,277.5 L1088.0,272.6 L1107.8,264.7 L1123.6,246.0 L1139.4,235.0 L1159.0,223.3 L1179.8,206.5" fill="none" stroke="#b870a6" stroke-width="1.15" stroke-dasharray="5.5,3.5"/>
<path d="M558.9,605.0 L585.5,591.0 L603.3,581.2 L621.0,567.0 L647.6,553.7 L674.3,538.0 L697.3,524.3 L727.5,506.5 L745.3,495.9 L760.7,483.0 L773.1,472.3 L785.5,467.0 L797.9,459.9 L810.4,451.9 L821.0,447.5 L833.4,439.5 L845.9,429.7 L860.0,422.6 L874.3,415.5 L897.3,397.8 L909.8,389.6 L924.0,373.6 L936.4,367.4 L948.8,362.1 L960.0,355.9 L975.6,346.4 L997.3,330.6 L1009.0,327.6 L1036.8,313.8 L1050.6,298.2 L1060.5,292.3 L1076.3,276.5 L1088.0,270.6 L1107.8,259.8 L1123.6,245.0 L1139.4,234.0 L1159.0,223.3 L1179.8,209.5" fill="none" stroke="#b5e0e1" stroke-width="1.15" stroke-dasharray="5.5,3.5"/>
<path d="M558.9,609.7 L571.3,608.8 L585.5,602.5 L606.8,597.2 L621.0,591.0 L635.2,575.0 L647.6,572.4 L651.2,550.2 L654.0,530.0 L656.5,506.5 L658.3,495.9 L674.3,487.0 L684.9,479.9 L697.3,478.1 L709.8,471.9 L727.5,466.6 L745.3,462.1 L760.7,451.0 L773.1,443.9 L785.5,440.4 L797.9,438.6 L810.4,433.3 L821.0,430.6 L838.8,422.6 L856.5,416.4 L874.3,408.4 L897.3,397.8 L909.8,391.4 L924.0,378.9 L936.4,374.5 L948.8,368.3 L960.0,362.1 L983.5,348.3 L1009.0,338.5 L1025.0,328.6 L1038.8,323.7 L1056.5,310.9 L1068.4,298.2 L1076.3,283.4 L1088.0,277.5 L1107.8,266.7 L1127.5,250.9 L1147.3,236.0 L1165.0,228.2 L1179.8,217.3" fill="none" stroke="#86c4f2" stroke-width="1.15" stroke-dasharray="5.5,3.5"/>
<path d="M558.9,610.5 L583.7,607.0 L596.2,578.6 L605.9,540.2 L610.4,527.8 L621.0,522.5 L633.0,521.0" fill="none" stroke="#c9b8ee" stroke-width="1.15" stroke-dasharray="5.5,3.5"/>
<path d="M748.8,492.3 L755.3,470.5 L758.9,461.7" fill="none" stroke="#c9b8ee" stroke-width="1.15" stroke-dasharray="5.5,3.5"/>
<path d="M899.1,436.8 L904.4,413.7 L909.8,390.7 L915.1,383.6 L922.2,379.8 L934.6,371.0" fill="none" stroke="#c9b8ee" stroke-width="1.15" stroke-dasharray="5.5,3.5"/>
<path d="M961.8,376.9 L974.7,375.4" fill="none" stroke="#c9b8ee" stroke-width="1.15" stroke-dasharray="5.5,3.5"/>
<path d="M1050.6,346.4 L1062.4,336.5 L1068.4,311.8 L1072.3,288.4 L1076.3,281.5 L1100.0,272.6 L1111.8,247.0 L1125.6,235.0" fill="none" stroke="#c9b8ee" stroke-width="1.15" stroke-dasharray="5.5,3.5"/>
<line x1="546.5" x2="546.5" y1="612.6" y2="615.1" stroke="#d0d0da" stroke-width="1"/>
<text x="546.5" y="626.6" text-anchor="middle" class="yl xl">01/06/2017</text>
<line x1="622.0" x2="622.0" y1="612.6" y2="615.1" stroke="#d0d0da" stroke-width="1"/>
<text x="622.0" y="626.6" text-anchor="middle" class="yl xl">01/12/2017</text>
<line x1="697.5" x2="697.5" y1="612.6" y2="615.1" stroke="#d0d0da" stroke-width="1"/>
<text x="697.5" y="626.6" text-anchor="middle" class="yl xl">01/06/2018</text>
<line x1="773.0" x2="773.0" y1="612.6" y2="615.1" stroke="#d0d0da" stroke-width="1"/>
<text x="773.0" y="626.6" text-anchor="middle" class="yl xl">01/12/2018</text>
<line x1="848.5" x2="848.5" y1="612.6" y2="615.1" stroke="#d0d0da" stroke-width="1"/>
<text x="848.5" y="626.6" text-anchor="middle" class="yl xl">01/06/2019</text>
<line x1="924.0" x2="924.0" y1="612.6" y2="615.1" stroke="#d0d0da" stroke-width="1"/>
<text x="924.0" y="626.6" text-anchor="middle" class="yl xl">01/12/2019</text>
<line x1="999.5" x2="999.5" y1="612.6" y2="615.1" stroke="#d0d0da" stroke-width="1"/>
<text x="999.5" y="626.6" text-anchor="middle" class="yl xl">01/06/2020</text>
<line x1="1075.0" x2="1075.0" y1="612.6" y2="615.1" stroke="#d0d0da" stroke-width="1"/>
<text x="1075.0" y="626.6" text-anchor="middle" class="yl xl">01/12/2020</text>
<line x1="1150.5" x2="1150.5" y1="612.6" y2="615.1" stroke="#d0d0da" stroke-width="1"/>
<text x="1150.5" y="626.6" text-anchor="middle" class="yl xl">01/06/2021</text>
<text x="936" y="655.6" text-anchor="middle" class="lg">Month Start Date</text>
<text transform="translate(489.5,361.8) rotate(-90)" text-anchor="middle" class="lg">Sales Amount $</text>
<text x="694.4" y="684.4" class="lg">Premium Category:</text>
<circle cx="789.9" cy="680.6" r="4" fill="#4199e2"/><text x="796.8" y="684.4" class="lg">High End Premium</text>
<circle cx="888.5" cy="680.6" r="4" fill="#9673d6"/><text x="896" y="684.4" class="lg">NA</text>
<circle cx="918.6" cy="680.6" r="4" fill="#66bcbe"/><text x="925.6" y="684.4" class="lg">Premium</text>
<circle cx="975.6" cy="680.6" r="4" fill="#fbd147"/><text x="982.6" y="684.4" class="lg">Super Premium</text>
<circle cx="1060.3" cy="680.6" r="4" fill="#7b1a66"/><text x="1067.6" y="684.4" class="lg">Ultra Premium</text>
<circle cx="1140.5" cy="680.6" r="4" fill="#1b3a5c"/><text x="1148.1" y="684.4" class="lg">Value</text>
</g>
</svg>
<div class="abs" style="left:439.5px;top:730.6px;width:740.7px;height:1px;background:#dcdcdc"></div>
<div class="abs" style="left:447.5px;top:736.5px;width:128px;height:56px;background:#fff;border:1px solid #cfcfcf;border-bottom:none;box-sizing:border-box;box-shadow:1px 0 2px rgba(0,0,0,.18);overflow:hidden">
<svg width="128" height="56" viewBox="0 0 128 56" style="position:absolute;left:-1px;top:-1px">
<rect x="8.7" y="6.50" width="3" height="1" fill="#dadada"/><rect x="8.7" y="9.83" width="3" height="1" fill="#dadada"/><rect x="8.7" y="13.16" width="3" height="1" fill="#dadada"/><rect x="8.7" y="16.49" width="3" height="1" fill="#dadada"/><rect x="8.7" y="19.82" width="3" height="1" fill="#dadada"/><rect x="8.7" y="23.15" width="3" height="1" fill="#dadada"/><rect x="8.7" y="26.48" width="3" height="1" fill="#dadada"/><rect x="8.7" y="29.81" width="3" height="1" fill="#dadada"/><rect x="8.7" y="33.14" width="3" height="1" fill="#dadada"/><rect x="8.7" y="36.47" width="3" height="1" fill="#dadada"/><rect x="8.7" y="39.80" width="3" height="1" fill="#dadada"/><rect x="8.7" y="43.13" width="3" height="1" fill="#dadada"/><rect x="8.7" y="46.46" width="3" height="1" fill="#dadada"/><rect x="8.7" y="49.79" width="3" height="1" fill="#dadada"/><rect x="8.7" y="53.12" width="3" height="1" fill="#dadada"/>
<rect x="5.2" y="32" width="1" height="7" fill="#e3e3e3"/>

<g transform="translate(-59.57,-8.04) scale(0.1347,0.1125)" style="--bw:12.7px"><use href="#bars"/></g>
</svg></div>
<div class="abs" style="left:582px;top:736.5px;width:128px;height:56px;background:#fff;border:1px solid #4a9be0;border-bottom:none;box-sizing:border-box;box-shadow:1px 0 2px rgba(0,0,0,.18);overflow:hidden">
<svg width="128" height="56" viewBox="0 0 128 56" style="position:absolute;left:-1px;top:-1px">
<rect x="9.1" y="6.50" width="3" height="1" fill="#dadada"/><rect x="9.1" y="9.83" width="3" height="1" fill="#dadada"/><rect x="9.1" y="13.16" width="3" height="1" fill="#dadada"/><rect x="9.1" y="16.49" width="3" height="1" fill="#dadada"/><rect x="9.1" y="19.82" width="3" height="1" fill="#dadada"/><rect x="9.1" y="23.15" width="3" height="1" fill="#dadada"/><rect x="9.1" y="26.48" width="3" height="1" fill="#dadada"/><rect x="9.1" y="29.81" width="3" height="1" fill="#dadada"/><rect x="9.1" y="33.14" width="3" height="1" fill="#dadada"/><rect x="9.1" y="36.47" width="3" height="1" fill="#dadada"/><rect x="9.1" y="39.80" width="3" height="1" fill="#dadada"/><rect x="9.1" y="43.13" width="3" height="1" fill="#dadada"/><rect x="9.1" y="46.46" width="3" height="1" fill="#dadada"/><rect x="9.1" y="49.79" width="3" height="1" fill="#dadada"/><rect x="9.1" y="53.12" width="3" height="1" fill="#dadada"/>
<rect x="5.6" y="32" width="1" height="7" fill="#e3e3e3"/>
<path d="M66.3,32.5 L110.0,4.1" stroke="#eaeaf2" stroke-width="1" fill="none"/><path d="M68.0,35.5 L106.0,11.5" stroke="#f1f1f6" stroke-width="1" fill="none"/><rect x="116.2" y="6.0" width="2.2" height="1" fill="#d5d5d5"/><rect x="116.2" y="11.9" width="2.2" height="1" fill="#d5d5d5"/><rect x="116.2" y="17.8" width="2.2" height="1" fill="#d5d5d5"/><rect x="116.2" y="23.7" width="2.2" height="1" fill="#d5d5d5"/><rect x="116.2" y="29.6" width="2.2" height="1" fill="#d5d5d5"/><rect x="116.2" y="35.5" width="2.2" height="1" fill="#d5d5d5"/><rect x="116.2" y="41.4" width="2.2" height="1" fill="#d5d5d5"/><rect x="116.2" y="47.3" width="2.2" height="1" fill="#d5d5d5"/><rect x="116.2" y="53.2" width="2.2" height="1" fill="#d5d5d5"/><rect x="121.0" y="31" width="1" height="8" fill="#e3e3e3"/>
<g transform="translate(-55.62,-8.04) scale(0.1283,0.1125)" style="--bw:12.7px"><use href="#bars"/></g>
</svg></div>
</body></html>
